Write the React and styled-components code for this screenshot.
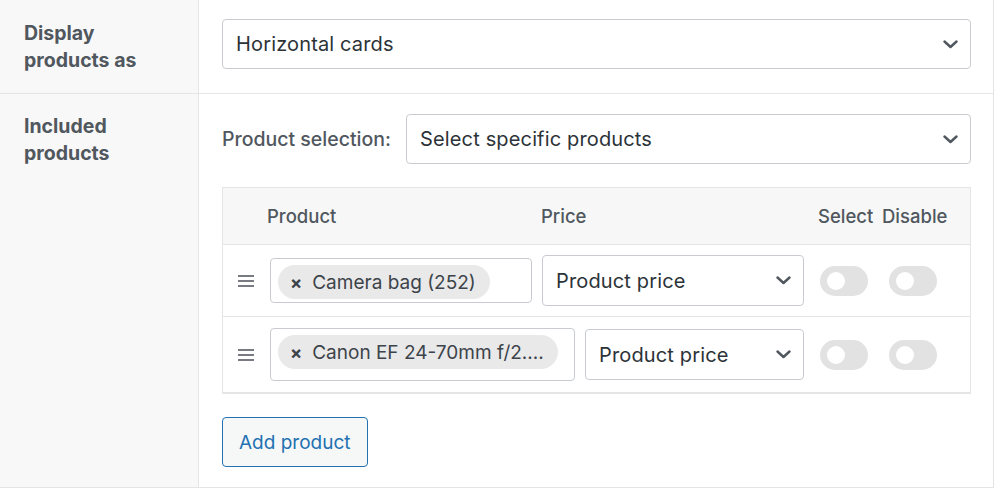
import React from 'react';
import styled, { createGlobalStyle } from 'styled-components';

const GlobalStyle = createGlobalStyle`
  body {
    margin: 0;
    background: #fff;
    font-family: Inter, "Noto Sans", "Liberation Sans", sans-serif;
    color: #2c3338;
  }
`;

const Page = styled.div`
  width: 994px;
  height: 488px;
  border-right: 1px solid #e5e5e5;
  box-sizing: border-box;
  display: flex;
  flex-direction: column;
`;

const SettingRow = styled.div`
  display: grid;
  grid-template-columns: 199px 1fr;
  border-bottom: 1px solid #e5e5e5;
  flex: ${({ grow }) => (grow ? 1 : 'none')};
`;

const Label = styled.div`
  background: #f8f8f8;
  border-right: 1px solid #e5e5e5;
  padding: ${({ top }) => top}px 24px 0 24px;
  font-size: 19.5px;
  font-weight: 700;
  line-height: 27px;
  color: #50575e;
`;

const Field = styled.div`
  padding: ${({ top }) => top}px 22px ${({ bottom }) => bottom}px 23px;
  display: flex;
  flex-direction: column;
`;

const SelectBox = styled.div`
  box-sizing: border-box;
  height: ${({ h }) => h || 50}px;
  width: ${({ w }) => (w ? `${w}px` : 'auto')};
  flex: ${({ w }) => (w ? 'none' : '1 1 auto')};
  border: 1px solid #c8ccd0;
  border-radius: 4px;
  background: #fff;
  display: flex;
  align-items: center;
  justify-content: space-between;
  padding: 0 12px 0 13px;
  font-size: 20px;
  letter-spacing: 0.15px;
  color: #2c3338;
`;

const Chevron = () => (
  <svg width="15" height="9" viewBox="0 0 15 9">
    <path d="M1.5 1.5 L7.5 7 L13.5 1.5" fill="none" stroke="#50575e" strokeWidth="2.4" strokeLinecap="round" strokeLinejoin="round" />
  </svg>
);

const Select = ({ value, w, h }) => (
  <SelectBox w={w} h={h}>
    <span>{value}</span>
    <Chevron />
  </SelectBox>
);

const InlineField = styled.div`
  display: flex;
  align-items: center;
`;

const InlineLabel = styled.label`
  width: 184px;
  flex: none;
  font-size: 19.5px;
  font-weight: 500;
  color: #50575e;
`;

const Table = styled.div`
  margin-top: 23px;
  border: 1px solid #e5e5e5;
  border-bottom-width: 2px;
`;

const HeadRow = styled.div`
  display: flex;
  align-items: center;
  height: 56px;
  background: #f7f7f7;
  border-bottom: 1px solid #e5e5e5;
  font-size: 18.5px;
  font-weight: 500;
  color: #50575e;
`;

const HeadCell = styled.div`
  width: ${({ w }) => w}px;
  flex: none;
`;

const BodyRow = styled.div`
  display: flex;
  align-items: center;
  height: ${({ h }) => h}px;
  border-bottom: ${({ last }) => (last ? 'none' : '1px solid #e5e5e5')};
`;

const Handle = styled.div`
  width: 47px;
  flex: none;
  display: flex;
  justify-content: center;
  padding-right: 1px;
  box-sizing: border-box;
`;

const ProductBox = styled.div`
  box-sizing: border-box;
  width: ${({ w }) => w}px;
  height: ${({ h }) => h}px;
  flex: none;
  border: 1px solid #c8ccd0;
  border-radius: 4px;
  padding: 6px 7px;
  margin-right: 10px;
`;

const Token = styled.span`
  display: inline-flex;
  align-items: center;
  height: 34px;
  padding: 0 14px 0 12px;
  border-radius: 17px;
  background: #e9e9e9;
  font-size: 19px;
  color: #3c434a;
  white-space: nowrap;
`;

const Remove = styled.span`
  font-size: 18px;
  font-weight: 700;
  margin-right: 10px;
  color: #3c434a;
`;

const Toggle = styled.div`
  width: 48px;
  height: 30px;
  flex: none;
  border-radius: 15px;
  background: #e2e2e2;
  margin-left: ${({ gap }) => gap}px;
  display: flex;
  align-items: center;
  padding-left: 7px;
  box-sizing: border-box;

  &::after {
    content: '';
    width: 18px;
    height: 18px;
    border-radius: 50%;
    background: #fff;
  }
`;

const AddButton = styled.button`
  align-self: flex-start;
  margin-top: 23px;
  height: 50px;
  padding: 0 16px;
  border: 1px solid #2271b1;
  border-radius: 4px;
  background: #f6f7f7;
  color: #2271b1;
  font-family: inherit;
  font-size: 19px;
`;

const MenuIcon = () => (
  <svg width="16" height="14" viewBox="0 0 16 14">
    <rect x="0" y="1" width="16" height="2" fill="#787c82" />
    <rect x="0" y="6" width="16" height="2" fill="#787c82" />
    <rect x="0" y="11" width="16" height="2" fill="#787c82" />
  </svg>
);

const rows = [
  { name: 'Camera bag (252)', productW: 262, productH: 45, priceW: 262, height: 71 },
  { name: 'Canon EF 24-70mm f/2....', productW: 305, productH: 53, priceW: 219, height: 75 },
];

const App = () => (
  <>
    <GlobalStyle />
    <Page>
      <SettingRow>
        <Label top={20}>Display products as</Label>
        <Field top={19} bottom={24}>
          <Select value="Horizontal cards" />
        </Field>
      </SettingRow>
      <SettingRow grow>
        <Label top={19}>Included products</Label>
        <Field top={20} bottom={20}>
          <InlineField>
            <InlineLabel>Product selection:</InlineLabel>
            <Select value="Select specific products" />
          </InlineField>
          <Table>
            <HeadRow>
              <HeadCell w={44} />
              <HeadCell w={274}>Product</HeadCell>
              <HeadCell w={277}>Price</HeadCell>
              <HeadCell w={64}>Select</HeadCell>
              <HeadCell w={80}>Disable</HeadCell>
            </HeadRow>
            {rows.map((row, i) => (
              <BodyRow key={row.name} h={row.height} last={i === rows.length - 1}>
                <Handle>
                  <MenuIcon />
                </Handle>
                <ProductBox w={row.productW} h={row.productH}>
                  <Token>
                    <Remove>×</Remove>
                    {row.name}
                  </Token>
                </ProductBox>
                <Select value="Product price" w={row.priceW} h={51} />
                <Toggle gap={16} />
                <Toggle gap={21} />
              </BodyRow>
            ))}
          </Table>
          <AddButton>Add product</AddButton>
        </Field>
      </SettingRow>
    </Page>
  </>
);

export default App;
